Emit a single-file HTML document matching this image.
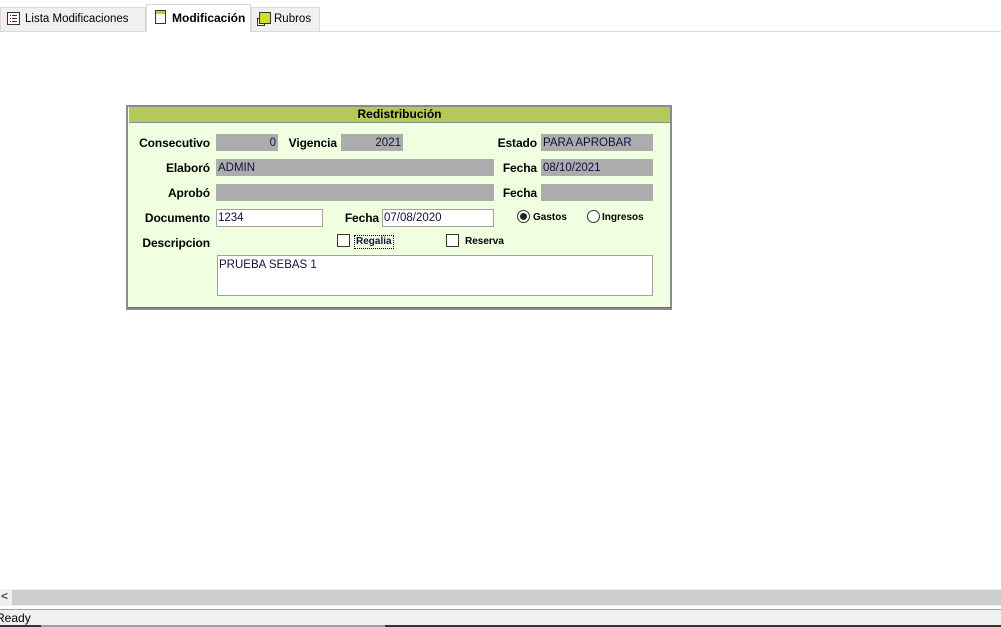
<!DOCTYPE html>
<html><head><meta charset="utf-8"><style>
*{margin:0;padding:0;box-sizing:border-box}
body{width:1001px;height:627px;position:relative;background:#fff;font-family:"Liberation Sans",sans-serif;font-size:12px;overflow:hidden;color:#000}
.a{position:absolute}
.tab{position:absolute;background:#f0f0f0;border:1px solid #d9d9d9;border-bottom:none;height:24px;top:7px;font-size:11.5px;line-height:22px}
.lbl{position:absolute;font-weight:bold;font-size:12px;text-align:right;line-height:18px;letter-spacing:-0.1px}
.g{position:absolute;background:#acacac;height:17px;line-height:18px;font-size:11.5px;color:#101040;padding:0 2px}
.w{position:absolute;background:#fff;border:1px solid #a0a0a0;height:18px;line-height:17px;font-size:11.5px;color:#101040;padding:0 1px}
.sm{font-size:10px;font-weight:bold;position:absolute;line-height:14px}
.cb{position:absolute;width:13px;height:13px;border:1px solid #333;background:#fff}
.rd{position:absolute;width:13px;height:13px;border:1px solid #333;border-radius:50%;background:#fff}
</style></head><body>
<div class="a" style="left:0;top:31px;width:1001px;height:1px;background:#d9d9d9"></div>
<div class="tab" style="left:0;width:146px;padding-left:24px">Lista Modificaciones</div>
<svg class="a" style="left:7px;top:12px" width="13" height="13"><rect x="0.5" y="0.5" width="12" height="12" fill="#fff" stroke="#333"/><g stroke="#c00"><line x1="3" y1="3.5" x2="4" y2="3.5"/><line x1="3" y1="6.5" x2="4" y2="6.5"/><line x1="3" y1="9.5" x2="4" y2="9.5"/></g><g stroke="#333"><line x1="5" y1="3.5" x2="10" y2="3.5"/><line x1="5" y1="6.5" x2="10" y2="6.5"/><line x1="5" y1="9.5" x2="10" y2="9.5"/></g></svg>
<div class="tab" style="left:146px;top:4px;height:28px;width:105px;background:#fff;font-weight:bold;padding-left:25px;line-height:26px;font-size:12px">Modificación</div>
<svg class="a" style="left:155px;top:10px" width="11" height="14"><rect x="0.5" y="0.5" width="10" height="13" fill="#fff" stroke="#333"/><rect x="1" y="1" width="9" height="3" fill="#b5d334"/></svg>
<div class="tab" style="left:251px;width:69px;padding-left:22px">Rubros</div>
<svg class="a" style="left:256px;top:11px" width="15" height="15"><rect x="1.5" y="7.5" width="7" height="7" fill="#fff" stroke="#333"/><rect x="3.5" y="1.5" width="11" height="11" fill="#cfe02a" stroke="#333"/></svg>

<div class="a" style="left:126px;top:105px;width:546px;height:205px;border:2px solid #8c8c8c;background:#efffe0"></div>
<div class="a" style="left:129px;top:107px;width:541px;height:16px;background:#b5c85a;border-bottom:1px solid #8c8c8c;text-align:center;font-weight:bold;line-height:15px;font-size:12px">Redistribución</div>
<div class="a" style="left:128px;top:307px;width:543px;height:1px;background:#6c6c6c"></div>

<div class="lbl" style="left:130px;width:80px;top:134px">Consecutivo</div>
<div class="g" style="left:216px;top:134px;width:62px;text-align:right">0</div>
<div class="lbl" style="left:280px;width:57px;top:134px">Vigencia</div>
<div class="g" style="left:341px;top:134px;width:62px;text-align:right">2021</div>
<div class="lbl" style="left:480px;width:57px;top:134px">Estado</div>
<div class="g" style="left:541px;top:134px;width:112px">PARA APROBAR</div>

<div class="lbl" style="left:130px;width:80px;top:159px">Elaboró</div>
<div class="g" style="left:216px;top:159px;width:278px">ADMIN</div>
<div class="lbl" style="left:480px;width:57px;top:159px">Fecha</div>
<div class="g" style="left:541px;top:159px;width:112px">08/10/2021</div>

<div class="lbl" style="left:130px;width:80px;top:184px">Aprobó</div>
<div class="g" style="left:216px;top:184px;width:278px"></div>
<div class="lbl" style="left:480px;width:57px;top:184px">Fecha</div>
<div class="g" style="left:541px;top:184px;width:112px"></div>

<div class="lbl" style="left:130px;width:80px;top:209px">Documento</div>
<div class="w" style="left:216px;top:209px;width:107px">1234</div>
<div class="lbl" style="left:330px;width:49px;top:209px">Fecha</div>
<div class="w" style="left:382px;top:209px;width:112px">07/08/2020</div>
<div class="rd" style="left:517px;top:210px"></div><div class="a" style="left:520px;top:213px;width:7px;height:7px;border-radius:50%;background:#222"></div>
<div class="sm" style="left:533px;top:211px">Gastos</div>
<div class="rd" style="left:587px;top:210px"></div>
<div class="sm" style="left:602px;top:211px">Ingresos</div>

<div class="lbl" style="left:130px;width:80px;top:234px">Descripcion</div>
<div class="cb" style="left:337px;top:234px"></div>
<div class="sm" style="left:354px;top:235px;border:1px dotted #000;padding:0 1px;line-height:12px;color:#101040">Regalia</div>
<div class="cb" style="left:446px;top:234px"></div>
<div class="sm" style="left:465px;top:235px">Reserva</div>

<div class="a" style="left:217px;top:255px;width:436px;height:41px;background:#fff;border:1px solid #a0a0a0;padding:2px 1px;color:#101040;font-size:11.5px;line-height:14px">PRUEBA SEBAS 1</div>

<div class="a" style="left:0;top:589px;width:1001px;height:17px;background:#f0f0f0"></div>
<div class="a" style="left:12px;top:590px;width:989px;height:15px;background:#cdcdcd"></div>
<div class="a" style="left:1px;top:589px;font-size:12px;font-weight:bold;color:#555">&lt;</div>
<div class="a" style="left:0;top:609px;width:1001px;height:1px;background:#a0a0a0"></div>
<div class="a" style="left:0;top:610px;width:1001px;height:17px;background:#f0f0f0;line-height:16px;font-size:12px;text-indent:-4px">Ready</div>
<div class="a" style="left:0;top:625px;width:41px;height:2px;background:#333"></div>
<div class="a" style="left:41px;top:625px;width:344px;height:2px;background:#a0a0a0"></div>
<div class="a" style="left:385px;top:625px;width:616px;height:2px;background:#333"></div>
</body></html>
